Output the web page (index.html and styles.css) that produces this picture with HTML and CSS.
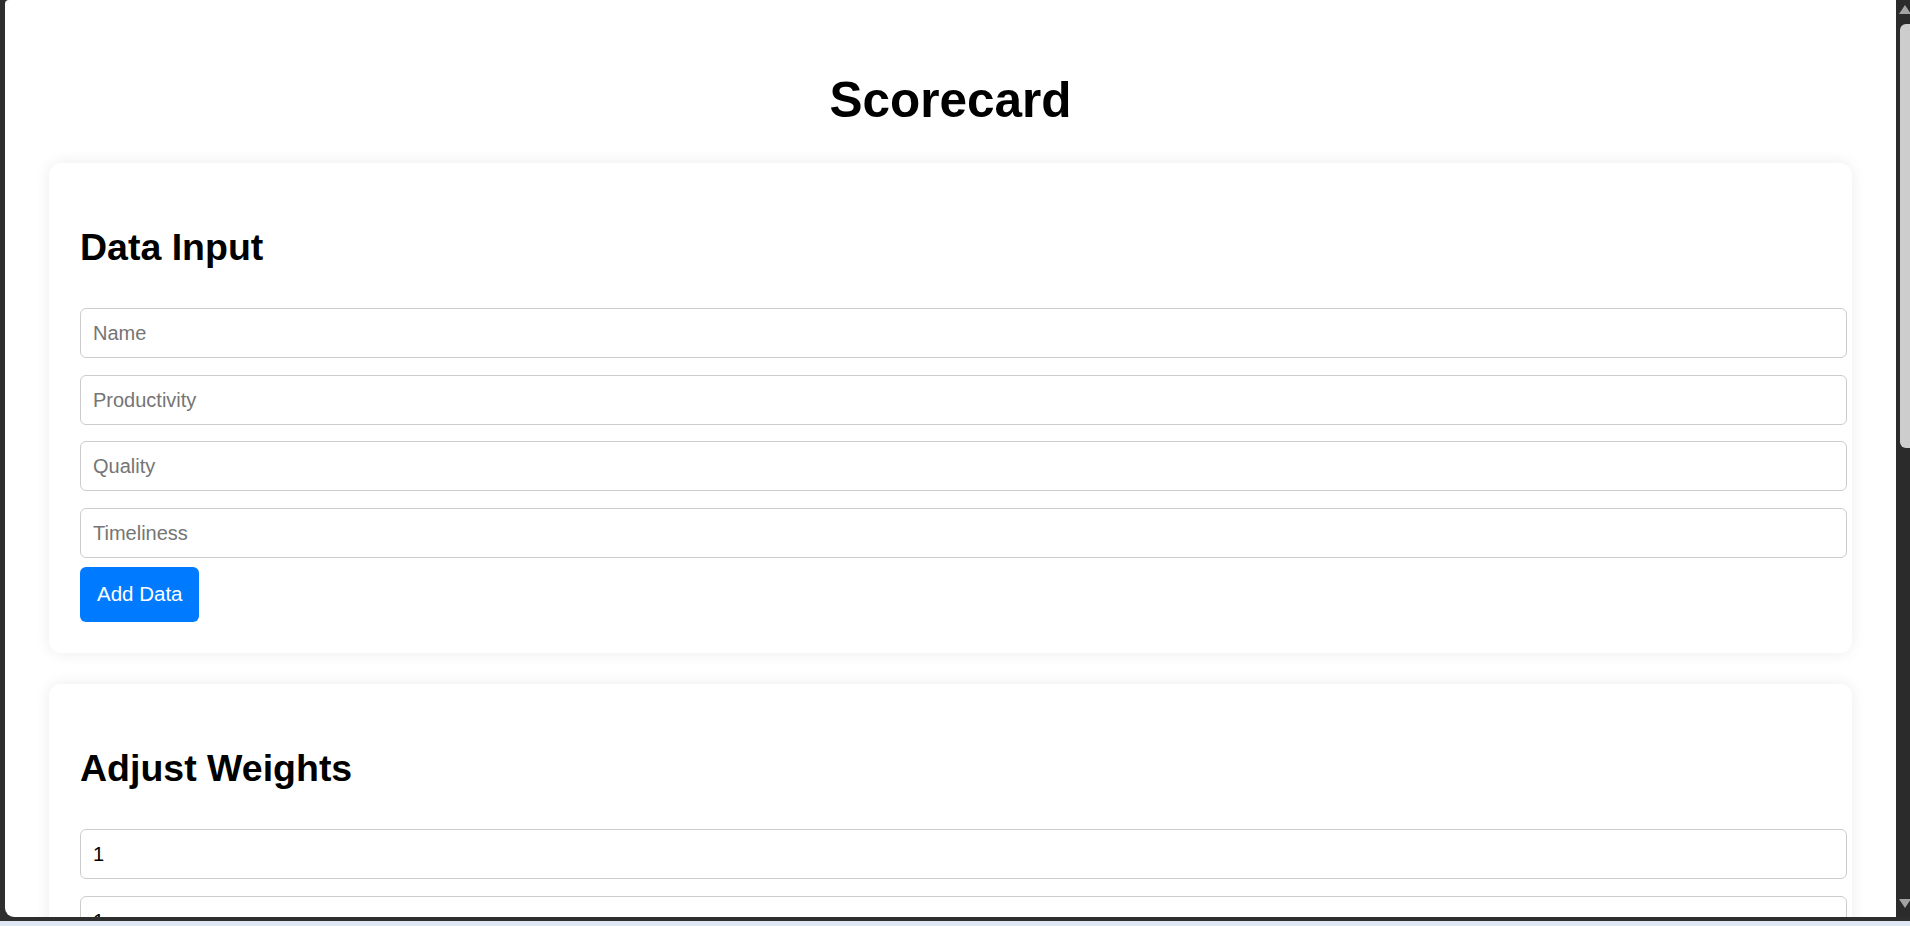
FILE: index.html
```html
<!DOCTYPE html>
<html lang="en">
<head>
<meta charset="utf-8">
<title>Scorecard</title>
<link rel="stylesheet" href="styles.css">
</head>
<body>
<div class="shell">
  <div class="frame">
    <div class="viewport">
      <h1 class="title">Scorecard</h1>
      <section class="card">
        <h2 class="card-title">Data Input</h2>
        <input class="field" type="text" placeholder="Name">
        <input class="field" type="text" placeholder="Productivity">
        <input class="field" type="text" placeholder="Quality">
        <input class="field" type="text" placeholder="Timeliness">
        <button class="btn" type="button">Add Data</button>
      </section>
      <section class="card">
        <h2 class="card-title">Adjust Weights</h2>
        <input class="field" type="text" value="1">
        <input class="field" type="text" value="1">
        <input class="field" type="text" value="1">
        <button class="btn" type="button">Update Weights</button>
      </section>
    </div>
    <div class="scrollbar">
      <div class="arrow-up"></div>
      <div class="thumb"></div>
      <div class="track-fill"></div>
      <div class="arrow-down"></div>
    </div>
  </div>
  <div class="taskbar-edge"></div>
  <div class="taskbar"></div>
</div>
</body>
</html>
```

FILE: styles.css
```css
html, body {
  margin: 0;
  padding: 0;
  height: 926px;
  overflow: hidden;
  background: #2e2e2e;
}

.shell {
  display: flex;
  flex-direction: column;
  height: 926px;
}

.frame {
  display: flex;
  height: 917px;
}

.viewport {
  flex: 1;
  margin-left: 5px;
  background: #ffffff;
  border-radius: 4px 0 0 9px;
  overflow: hidden;
  padding: 0 44px;
  font-family: "Liberation Sans", Arial, sans-serif;
  color: #000;
}

.title {
  margin: 72px 0 36px;
  font-size: 49.5px;
  line-height: 55px;
  font-weight: 700;
  text-align: center;
}

.card {
  background: #fff;
  border-radius: 12px;
  box-shadow: 0 0 15px rgba(0, 0, 0, 0.08);
  padding: 30px 31px 31px;
  margin-bottom: 31px;
}

.card-title {
  margin: 34px 0 40px;
  font-size: 37.5px;
  line-height: 41px;
  font-weight: 700;
}

.field {
  display: block;
  box-sizing: content-box;
  width: 100%;
  height: 24px;
  padding: 12px;
  margin: 0 0 16.67px;
  border: 1px solid #cccccc;
  border-radius: 6px;
  font-family: "Liberation Sans", Arial, sans-serif;
  font-size: 20px;
  line-height: 24px;
  color: #000;
  background: #fff;
  outline: none;
}

.field::placeholder {
  color: #757575;
}

.field:last-of-type {
  margin-bottom: 9px;
}

.btn {
  display: block;
  height: 55px;
  padding: 0 17px;
  border: none;
  border-radius: 6px;
  background: #007bff;
  color: #fff;
  font-family: "Liberation Sans", Arial, sans-serif;
  font-size: 20.5px;
}

.scrollbar {
  width: 14px;
  background: #2b2b2b;
  display: flex;
  flex-direction: column;
  overflow: hidden;
}

.arrow-up {
  width: 0;
  height: 0;
  margin: 5px 0 0 3px;
  border-left: 6px solid transparent;
  border-right: 6px solid transparent;
  border-bottom: 9px solid #a3a3a3;
}

.thumb {
  margin: 10px 0 0 4px;
  height: 424px;
  background: #cdcdcd;
  border-radius: 6px 0 0 6px;
}

.track-fill {
  flex: 1;
}

.arrow-down {
  width: 0;
  height: 0;
  margin: 0 0 9px 3px;
  border-left: 6px solid transparent;
  border-right: 6px solid transparent;
  border-top: 9px solid #a3a3a3;
}

.taskbar-edge {
  height: 4px;
  background: #2e2e2e;
}

.taskbar {
  flex: 1;
  background: #dfe7f4;
}
```
